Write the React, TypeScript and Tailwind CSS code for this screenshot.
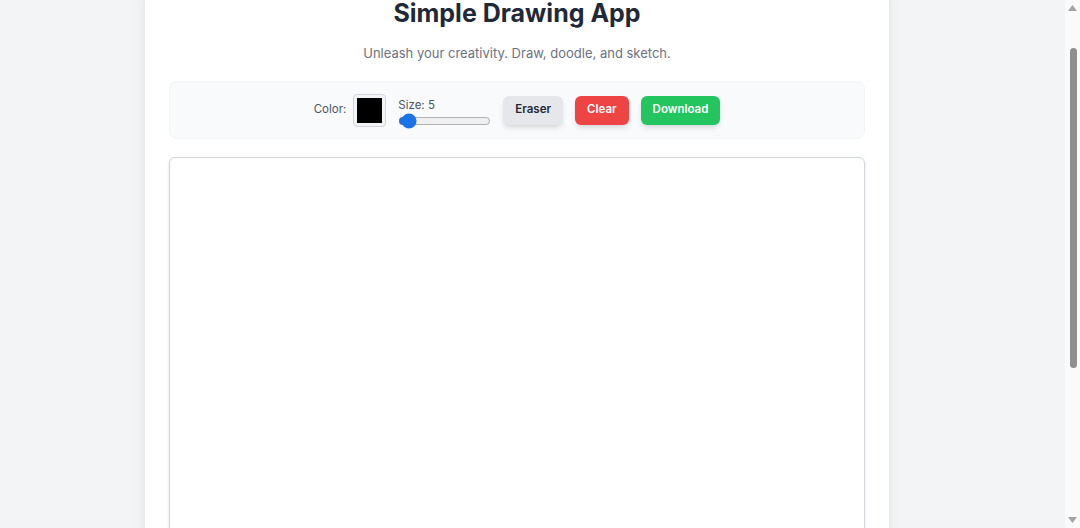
import React, { useLayoutEffect, useState } from "react";

export default function App() {
  const [color] = useState("#000000");
  const [size, setSize] = useState(5);

  // the reference is a little scrolled down
  useLayoutEffect(() => {
    window.scrollTo(0, 51);
  }, []);

  return (
    <div className="min-h-screen bg-[#f3f4f6] py-6 font-['Inter',sans-serif]">
      <div className="ml-[145px] w-[744px] rounded-lg bg-white p-6 shadow-lg">
        <h1 className="text-center text-[25px] font-bold leading-8 text-[#1f2937]">Simple Drawing App</h1>
        <p className="mt-[14px] text-center text-[13px] leading-5 text-[#6b7280]">
          Unleash your creativity. Draw, doodle, and sketch.
        </p>

        {/* Toolbar */}
        <div className="mt-[18px] flex h-[58px] items-center justify-center gap-3 rounded-lg border border-[#f3f4f6] bg-[#f9fafb]">
          <div className="flex items-center gap-[7px]">
            <span className="text-[11.5px] text-[#4b5563]">Color:</span>
            <div className="flex h-[33px] w-[33px] items-center justify-center rounded border border-[#d1d5db] bg-[#f3f4f6] p-[3px]">
              <div className="h-full w-full" style={{ backgroundColor: color }} />
            </div>
          </div>
          <div className="flex flex-col pt-[5px]">
            <span className="text-[11.5px] leading-4 text-[#4b5563]">Size: {size}</span>
            <input
              type="range"
              min={1}
              max={100}
              value={size}
              onChange={(e) => setSize(Number(e.target.value))}
              className="m-0 h-4 w-[93px] accent-[#1a73e8]"
            />
          </div>
          <button className="h-[29px] rounded-md bg-[#e5e7eb] px-3 text-[11.5px] font-semibold text-[#1f2937] shadow-md">
            Eraser
          </button>
          <button className="h-[29px] rounded-md bg-[#ef4444] px-3 text-[11.5px] font-semibold text-white shadow-md">
            Clear
          </button>
          <button className="h-[29px] rounded-md bg-[#22c55e] px-3 text-[11.5px] font-semibold text-white shadow-md">
            Download
          </button>
        </div>

        {/* Canvas */}
        <div className="mt-[18px] h-[560px] w-full rounded-md border border-[#d1d5db] bg-white shadow-sm" />
      </div>

      {/* browser scrollbar as in the screenshot */}
      <div className="fixed right-0 top-0 flex h-screen w-[15px] flex-col items-center bg-[#fafafa] py-[5px]">
        <svg width="9" height="6" viewBox="0 0 9 6"><path d="M4.5 0L9 6H0z" fill="#a3a3a3" /></svg>
        <div className="ml-[2px] mt-[37px] h-[320px] w-[7px] rounded-full bg-[#8f8f8f]" />
        <div className="flex-1" />
        <svg width="9" height="6" viewBox="0 0 9 6"><path d="M0 0h9L4.5 6z" fill="#a3a3a3" /></svg>
      </div>
    </div>
  );
}
